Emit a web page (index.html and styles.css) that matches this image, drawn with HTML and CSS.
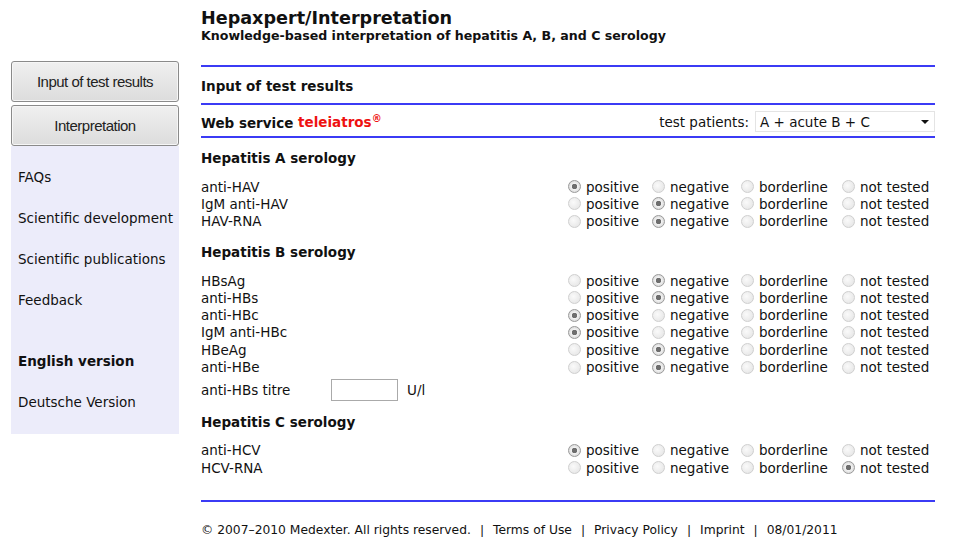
FILE: index.html
```html
<!DOCTYPE html>
<html lang="en">
<head>
  <meta charset="UTF-8" />
  <title>Hepaxpert/Interpretation</title>
  <link rel="stylesheet" href="styles.css">
</head>
<body>
  <div class="page">
    <div class="sidebar">
      <button class="nav-button">Input of test results</button>
      <button class="nav-button">Interpretation</button>
      <div class="menu">
        <a href="#">FAQs</a>
        <a href="#">Scientific development</a>
        <a href="#">Scientific publications</a>
        <a href="#">Feedback</a>
        <a href="#" class="lang current">English version</a>
        <a href="#">Deutsche Version</a>
      </div>
    </div>

    <div class="main">
      <div class="header">
        <h1>Hepaxpert/Interpretation</h1>
        <h2>Knowledge-based interpretation of hepatitis A, B, and C serology</h2>
      </div>

      <div class="bar"><h3>Input of test results</h3></div>

      <div class="bar service">
        <h3>Web service <span class="brand">teleiatros<sup>®</sup></span></h3>
        <label class="patients">test patients:
          <span class="select">A + acute B + C <span class="arrow"></span></span>
        </label>
      </div>

      <div class="section">
        <h4>Hepatitis A serology</h4>
        <div class="grid">
          <span>anti-HAV</span>
          <label><input type="radio" name="a1" checked> positive</label>
          <label><input type="radio" name="a1"> negative</label>
          <label><input type="radio" name="a1"> borderline</label>
          <label><input type="radio" name="a1"> not tested</label>

          <span>IgM anti-HAV</span>
          <label><input type="radio" name="a2"> positive</label>
          <label><input type="radio" name="a2" checked> negative</label>
          <label><input type="radio" name="a2"> borderline</label>
          <label><input type="radio" name="a2"> not tested</label>

          <span>HAV-RNA</span>
          <label><input type="radio" name="a3"> positive</label>
          <label><input type="radio" name="a3" checked> negative</label>
          <label><input type="radio" name="a3"> borderline</label>
          <label><input type="radio" name="a3"> not tested</label>
        </div>
      </div>

      <div class="section">
        <h4>Hepatitis B serology</h4>
        <div class="grid">
          <span>HBsAg</span>
          <label><input type="radio" name="b1"> positive</label>
          <label><input type="radio" name="b1" checked> negative</label>
          <label><input type="radio" name="b1"> borderline</label>
          <label><input type="radio" name="b1"> not tested</label>

          <span>anti-HBs</span>
          <label><input type="radio" name="b2"> positive</label>
          <label><input type="radio" name="b2" checked> negative</label>
          <label><input type="radio" name="b2"> borderline</label>
          <label><input type="radio" name="b2"> not tested</label>

          <span>anti-HBc</span>
          <label><input type="radio" name="b3" checked> positive</label>
          <label><input type="radio" name="b3"> negative</label>
          <label><input type="radio" name="b3"> borderline</label>
          <label><input type="radio" name="b3"> not tested</label>

          <span>IgM anti-HBc</span>
          <label><input type="radio" name="b4" checked> positive</label>
          <label><input type="radio" name="b4"> negative</label>
          <label><input type="radio" name="b4"> borderline</label>
          <label><input type="radio" name="b4"> not tested</label>

          <span>HBeAg</span>
          <label><input type="radio" name="b5"> positive</label>
          <label><input type="radio" name="b5" checked> negative</label>
          <label><input type="radio" name="b5"> borderline</label>
          <label><input type="radio" name="b5"> not tested</label>

          <span>anti-HBe</span>
          <label><input type="radio" name="b6"> positive</label>
          <label><input type="radio" name="b6" checked> negative</label>
          <label><input type="radio" name="b6"> borderline</label>
          <label><input type="radio" name="b6"> not tested</label>
        </div>
        <div class="titre">
          <span class="titre-label">anti-HBs titre</span>
          <input type="text" class="titre-input">
          <span>U/l</span>
        </div>
      </div>

      <div class="section">
        <h4>Hepatitis C serology</h4>
        <div class="grid">
          <span>anti-HCV</span>
          <label><input type="radio" name="c1" checked> positive</label>
          <label><input type="radio" name="c1"> negative</label>
          <label><input type="radio" name="c1"> borderline</label>
          <label><input type="radio" name="c1"> not tested</label>

          <span>HCV-RNA</span>
          <label><input type="radio" name="c2"> positive</label>
          <label><input type="radio" name="c2"> negative</label>
          <label><input type="radio" name="c2"> borderline</label>
          <label><input type="radio" name="c2" checked> not tested</label>
        </div>
      </div>

      <div class="footer">
        © 2007–2010 Medexter. All rights reserved.<span class="sep">|</span><a href="#">Terms of Use</a><span class="sep">|</span><a href="#">Privacy Policy</a><span class="sep">|</span><a href="#">Imprint</a><span class="sep">|</span>08/01/2011
      </div>
    </div>
  </div>
</body>
</html>
```

FILE: styles.css
```css
* {
  box-sizing: border-box;
}

body {
  margin: 0;
  font-family: 'DejaVu Sans', Verdana, sans-serif;
  font-size: 13.5px;
  color: #111;
  background: #fff;
}

.page {
  display: flex;
  align-items: flex-start;
}

/* left navigation */
.sidebar {
  width: 168px;
  margin-left: 11px;
  margin-top: 61px;
  display: flex;
  flex-direction: column;
  gap: 3px;
}

.nav-button {
  height: 41px;
  font-family: 'Liberation Sans', Arial, sans-serif;
  font-size: 15px;
  letter-spacing: -0.5px;
  color: #222;
  border: 1px solid #8a8a8a;
  border-radius: 3px;
  background: linear-gradient(#f0f0f0, #dcdcdc);
  box-shadow: inset 0 0 0 1px #f6f6f6;
  cursor: pointer;
}

.menu {
  margin-top: -3px;
  background: #ececfa;
  padding: 11px 0 11px 7px;
  display: flex;
  flex-direction: column;
}

.menu a {
  color: #111;
  text-decoration: none;
  font-size: 13.5px;
  line-height: 41px;
}

.menu a.lang {
  margin-top: 20px;
}

.menu a.current {
  font-weight: bold;
}

/* main column */
.main {
  width: 734px;
  margin-left: 22px;
}

.header {
  padding-top: 9px;
  height: 65px;
}

.header h1 {
  margin: 0;
  font-size: 17.6px;
  line-height: 19px;
}

.header h2 {
  margin: 0;
  font-size: 12.6px;
  line-height: 16px;
}

.bar {
  border-top: 2px solid #3b3bf5;
  height: 38px;
  padding-top: 2px;
  display: flex;
  align-items: center;
  justify-content: space-between;
}

.bar h3 {
  margin: 0;
  font-size: 13.5px;
}

.service {
  height: 35px;
  border-bottom: 2px solid #3b3bf5;
}

.brand {
  color: #ee1111;
}

.brand sup {
  font-size: 10px;
}

.patients {
  display: flex;
  align-items: center;
  gap: 6px;
}

.select {
  width: 180px;
  height: 21px;
  border: 1px solid #e4e4e4;
  padding: 0 4px;
  display: flex;
  align-items: center;
  justify-content: space-between;
}

.arrow {
  width: 0;
  height: 0;
  border-left: 4px solid transparent;
  border-right: 4px solid transparent;
  border-top: 4px solid #111;
  margin-right: 1px;
}

.section h4 {
  margin: 0;
  padding-top: 12px;
  height: 40px;
  font-size: 13.5px;
}

.grid {
  display: grid;
  grid-template-columns: 1fr 84px 89px 101px 93px;
  grid-auto-rows: 17.3px;
  align-items: center;
  margin-bottom: 2px;
}

.grid label {
  display: flex;
  align-items: center;
  gap: 5px;
  white-space: nowrap;
}

input[type="radio"] {
  appearance: none;
  margin: 0;
  width: 13px;
  height: 13px;
  border: 1px solid #cfcfcf;
  border-radius: 50%;
  background: radial-gradient(circle at 40% 40%, #fafafa, #e2e2e2);
  flex: none;
}

input[type="radio"]:checked {
  border-color: #9a9a9a;
  background: radial-gradient(circle, #6e6e6e 0 2.5px, #f2f2f2 3px, #dadada 6px);
}

.titre {
  display: flex;
  align-items: center;
  height: 24px;
}

.titre-label {
  width: 130px;
}

.titre-input {
  width: 67px;
  height: 22px;
  border: 1px solid #aaa;
  margin-right: 9px;
}

.footer {
  border-top: 2px solid #3b3bf5;
  margin-top: 24px;
  padding-top: 21px;
  font-size: 12.3px;
}

.footer .sep {
  margin: 0 9px;
}

.footer a {
  color: #111;
  text-decoration: none;
}
```
